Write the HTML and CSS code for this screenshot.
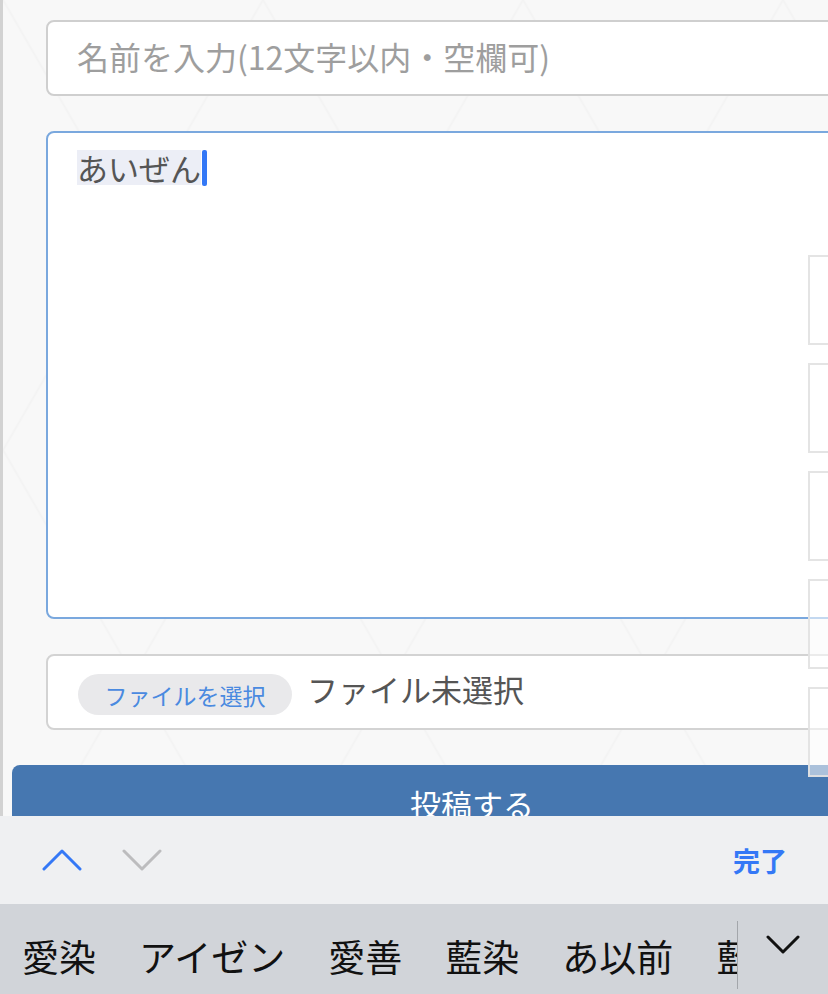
FILE: index.html
```html
<!DOCTYPE html>
<html lang="ja">
<head>
<meta charset="utf-8">
<title>投稿フォーム</title>
<link rel="stylesheet" href="styles.css">
</head>
<body>
<div class="screen">
  <div class="content">
    <div class="fields">
      <div class="name-input"><span class="placeholder">名前を入力(12文字以内・空欄可)</span></div>
      <div class="body-input"><span class="marked">あいぜん</span><span class="caret"></span></div>
      <div class="file-input"><span class="file-btn">ファイルを選択</span><span class="file-status">ファイル未選択</span></div>
    </div>
    <div class="submit">投稿する</div>
    <div class="side-stack">
      <div class="side-box"></div>
      <div class="side-box"></div>
      <div class="side-box"></div>
      <div class="side-box"></div>
      <div class="side-box"></div>
    </div>
  </div>
  <div class="accessory">
    <div class="arrows">
      <svg class="arrow" width="40" height="24" viewBox="0 0 40 24"><path d="M2 21 L20 3 L38 21" fill="none" stroke="#3478f6" stroke-width="3" stroke-linecap="round" stroke-linejoin="round"/></svg>
      <svg class="arrow" width="40" height="24" viewBox="0 0 40 24"><path d="M2 3 L20 21 L38 3" fill="none" stroke="#bcbcbe" stroke-width="3" stroke-linecap="round" stroke-linejoin="round"/></svg>
    </div>
    <div class="done">完了</div>
  </div>
  <div class="candidates">
    <div class="cand-list">
      <span class="cand">愛染</span>
      <span class="cand">アイゼン</span>
      <span class="cand">愛善</span>
      <span class="cand">藍染</span>
      <span class="cand">あ以前</span>
      <span class="cand">藍</span>
    </div>
    <div class="divider"></div>
    <div class="expand">
      <svg width="34" height="20" viewBox="0 0 34 20"><path d="M2 2 L17 17 L32 2" fill="none" stroke="#111" stroke-width="3" stroke-linecap="round" stroke-linejoin="round"/></svg>
    </div>
  </div>
</div>
</body>
</html>
```

FILE: styles.css
```css
html, body {
  margin: 0;
  padding: 0;
}
body {
  width: 828px;
  height: 994px;
  overflow: hidden;
  font-family: "Noto Sans CJK JP", "Noto Sans", sans-serif;
}
.screen {
  display: flex;
  flex-direction: column;
  width: 828px;
  height: 994px;
}
.content {
  position: relative;
  height: 816px;
  flex: none;
  overflow: hidden;
  background-color: #f8f8f8;
  background-image:
    linear-gradient(60deg, transparent 49.6%, rgba(0,0,0,0.018) 50%, transparent 50.4%),
    linear-gradient(-60deg, transparent 49.6%, rgba(0,0,0,0.018) 50%, transparent 50.4%);
  background-size: 260px 450px;
  border-left: 3px solid #d2d2d2;
  box-sizing: border-box;
  padding: 20px 0 0 9px;
}
.fields {
  display: flex;
  flex-direction: column;
  gap: 35px;
  padding-left: 34px;
}
.name-input, .body-input, .file-input {
  width: 900px;
  box-sizing: border-box;
  background: #fff;
  border-radius: 8px;
}
.name-input {
  height: 76px;
  border: 2px solid #cfcfcf;
  display: flex;
  align-items: center;
  padding-left: 29px;
}
.placeholder {
  font-size: 32px;
  color: #9e9e9e;
  margin-top: -4px;
}
.body-input {
  height: 488px;
  border: 2px solid #7aa8de;
  padding: 17px 0 0 29px;
  display: flex;
  align-items: flex-start;
}
.marked {
  font-size: 31px;
  line-height: 35px;
  color: #555;
  background: #eceef6;
}
.caret {
  width: 5px;
  height: 36px;
  background: #3478f6;
  border-radius: 2px;
  margin-left: 1px;
}
.file-input {
  height: 76px;
  border: 2px solid #d3d3d3;
  display: flex;
  align-items: center;
  padding-left: 30px;
  gap: 15px;
}
.file-btn {
  height: 41px;
  width: 214px;
  border-radius: 21px;
  background: #e9e9eb;
  color: #4a8ae0;
  font-size: 23px;
  display: flex;
  align-items: center;
  justify-content: center;
  margin-top: 5px;
}
.file-status {
  font-size: 31px;
  color: #555;
  margin-top: -8px;
}
.submit {
  margin-top: 35px;
  width: 920px;
  height: 76px;
  background: #4677b0;
  border-radius: 8px;
  color: #fff;
  font-size: 31px;
  display: flex;
  align-items: center;
  justify-content: center;
}
.side-stack {
  position: absolute;
  left: 805px;
  top: 255px;
  display: flex;
  flex-direction: column;
  gap: 18px;
}
.side-box {
  width: 60px;
  height: 90px;
  box-sizing: border-box;
  border: 2px solid rgba(225,225,225,0.9);
  background: rgba(255,255,255,0.55);
}
.accessory {
  height: 88px;
  flex: none;
  background: #eff0f2;
  display: flex;
  align-items: center;
  justify-content: space-between;
  padding: 0 41px 0 42px;
}
.arrows {
  display: flex;
  gap: 40px;
  align-items: center;
}
.done {
  color: #3478f6;
  font-size: 27px;
  font-weight: 700;
}
.candidates {
  height: 90px;
  flex: none;
  background: #d1d4d9;
  display: flex;
  align-items: center;
}
.cand-list {
  width: 737px;
  flex: none;
  overflow: hidden;
  white-space: nowrap;
  display: flex;
  gap: 43px;
  padding-left: 22px;
  box-sizing: border-box;
  margin-top: 14px;
}
.cand {
  font-size: 37px;
  color: #111;
  flex: none;
}
.divider {
  width: 1px;
  height: 68px;
  background: #a3a6ab;
  margin-top: 12px;
  flex: none;
}
.expand {
  flex: 1;
  display: flex;
  justify-content: center;
  margin-top: -8px;
}
```
